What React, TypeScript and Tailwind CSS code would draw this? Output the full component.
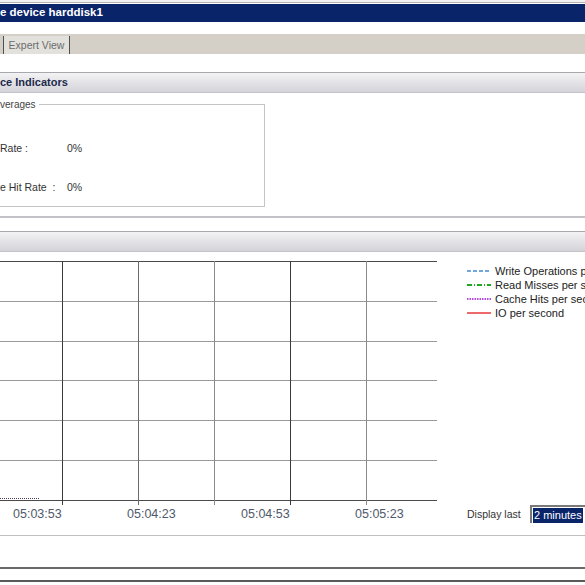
import React from 'react'

const font = { fontFamily: '"Liberation Sans", Arial, sans-serif' }

// grid of the perf chart
const hLines = [0.5, 40.5, 80.5, 119.5, 159.5, 199.5, 239.5]
const vLines = [
  { x: 62.5, c: '#3a3a3a' },
  { x: 138.5, c: '#6a6a6a' },
  { x: 214.5, c: '#8a8a8a' },
  { x: 290.5, c: '#3a3a3a' },
  { x: 366.5, c: '#8a8a8a' },
]

const legend = [
  { label: 'Write Operations per second', stroke: '#6fa8dc', dash: '4 2' },
  { label: 'Read Misses per second', stroke: '#22a722', dash: '5 2 1 2' },
  { label: 'Cache Hits per second', stroke: '#b84ae0', dash: '1.5 1' },
  { label: 'IO per second', stroke: '#ee6a6a', dash: '' },
]

const timeLabels = ['05:03:53', '05:04:23', '05:04:53', '05:05:23']

function SectionHeader({ title }: { title?: string }) {
  return (
    <div className="h-[21px] border-t border-[#a8a8ac] border-b border-b-[#c4c4c8] bg-gradient-to-b from-[#f3f3f5] to-[#d3d3d9] flex items-center">
      {title && <span className="text-[11px] font-bold text-[#1d2a4c] leading-none">{title}</span>}
    </div>
  )
}

function Chart() {
  return (
    <svg width="437" height="244" className="block">
      {hLines.map((y, i) => (
        <line
          key={y}
          x1="0"
          x2="437"
          y1={y}
          y2={y}
          stroke={i === 0 || i === hLines.length - 1 ? '#4a4a4a' : '#9a9a9a'}
          strokeWidth="1"
        />
      ))}
      {vLines.map((v) => (
        <line key={v.x} x1={v.x} x2={v.x} y1="0" y2="244" stroke={v.c} strokeWidth="1" />
      ))}
      <line x1="0" x2="40" y1="237.5" y2="237.5" stroke="#4a3a5a" strokeWidth="1" strokeDasharray="1 1" />
    </svg>
  )
}

export default function App() {
  return (
    <div className="w-[585px] h-[585px] overflow-hidden bg-white flex flex-col" style={font}>
      <div className="h-[2px] bg-[#f2f2f2]" />
      <div className="h-[1px] bg-[#b4b4b4]" />
      <div className="h-[1px] bg-white" />
      {/* title bar */}
      <div className="h-[18px] bg-[#0a246a] flex items-center">
        <span className="text-[11.5px] font-bold text-white leading-none">e device harddisk1</span>
      </div>
      <div className="h-[12px]" />
      {/* tab strip */}
      <div className="h-[20px] bg-[#d4d0c8] flex items-end">
        <div className="ml-[3px] h-[18px] w-[67px] border-l border-r border-[#505050] bg-[#e2e1dc] flex items-center justify-center">
          <span className="text-[10.5px] text-[#6c6c6c] leading-none">Expert View</span>
        </div>
      </div>
      <div className="h-[18px]" />
      <SectionHeader title="ce Indicators" />
      {/* averages panel */}
      <div className="h-[125px] pt-[11px] border-b-2 border-[#c2c2c6]">
        <div className="relative w-[265px] h-[103px] border-t border-r border-b border-[#c4c4c4]">
          <span className="absolute -top-[5px] left-0 bg-white pr-[3px] text-[10px] text-[#444] leading-none">verages</span>
          <div className="flex flex-col pt-[38px] gap-[28px] text-[10.5px] text-[#333] leading-none">
            <div className="flex">
              <span className="w-[67px]">Rate :</span>
              <span>0%</span>
            </div>
            <div className="flex">
              <span className="w-[67px]">e Hit Rate&nbsp;&nbsp;:</span>
              <span>0%</span>
            </div>
          </div>
        </div>
      </div>
      <div className="h-[13px]" />
      <SectionHeader />
      <div className="h-[9px]" />
      {/* chart area */}
      <div className="flex">
        <div className="flex flex-col w-[437px]">
          <Chart />
          <div className="flex pl-[13px] h-[18px] items-center text-[12.5px] text-[#4f5a6c] leading-none">
            {timeLabels.map((t) => (
              <span key={t} className="w-[114px] shrink-0">{t}</span>
            ))}
          </div>
        </div>
        <div className="ml-[30px] flex-1 min-w-0 flex flex-col justify-between">
          <div className="flex flex-col pt-[3px]">
            {legend.map((l) => (
              <div key={l.label} className="h-[14px] flex items-center whitespace-nowrap">
                <svg width="24" height="4" className="shrink-0 mr-[4px]">
                  <line
                    x1="0"
                    x2="24"
                    y1="2"
                    y2="2"
                    stroke={l.stroke}
                    strokeWidth="2"
                    strokeDasharray={l.dash || undefined}
                  />
                </svg>
                <span className="text-[11px] text-[#222] leading-none">{l.label}</span>
              </div>
            ))}
          </div>
          <div className="flex items-center h-[18px] whitespace-nowrap">
            <span className="text-[10.5px] text-[#333] leading-none w-[63px]">Display last</span>
            <div className="h-[18px] flex-1 border-t-2 border-l-2 border-t-[#7a7a7a] border-l-[#7a7a7a] bg-white flex items-center pl-[1px]">
              <span className="bg-[#0a246a] text-white text-[11px] leading-none px-[1px] py-[2px]">2 minutes</span>
            </div>
          </div>
        </div>
      </div>
      <div className="h-[12px]" />
      <div className="h-[1px] bg-[#c0c0c0]" />
      <div className="h-[31px]" />
      <div className="h-[2px] bg-[#6a6a6a]" />
      <div className="h-[11px]" />
      <div className="h-[2px] bg-[#5a5a5a]" />
      <div className="flex-1 bg-white" />
    </div>
  )
}
